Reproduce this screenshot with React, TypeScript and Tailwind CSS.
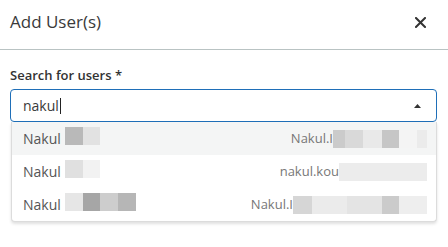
import { type FC } from 'react';

type Block = { w: number; c: string };

const Blur: FC<{ blocks: Block[]; h?: number }> = ({ blocks, h = 18 }) => (
  <span className="inline-flex shrink-0" style={{ height: h }}>
    {blocks.map((b, i) => (
      <span key={i} className="block h-full" style={{ width: b.w, background: b.c }} />
    ))}
  </span>
);

const rows: Array<{
  name: Block[];
  email: string;
  mail: Block[];
  active?: boolean;
}> = [
  {
    name: [
      { w: 18, c: '#b9b9b9' },
      { w: 17, c: '#e2e2e2' },
    ],
    email: 'Nakul.I',
    mail: [
      { w: 12, c: '#cbcbcb' },
      { w: 18, c: '#d9d9d9' },
      { w: 19, c: '#e9e9e9' },
      { w: 17, c: '#c6c6c6' },
      { w: 18, c: '#f4f4f4' },
      { w: 10, c: '#ebebeb' },
    ],
    active: true,
  },
  {
    name: [
      { w: 18, c: '#e0e0e0' },
      { w: 17, c: '#f2f2f2' },
    ],
    email: 'nakul.kou',
    mail: [{ w: 88, c: '#ececec' }],
  },
  {
    name: [
      { w: 18, c: '#e6e6e6' },
      { w: 17, c: '#a6a6a6' },
      { w: 18, c: '#cdcdcd' },
      { w: 18, c: '#b6b6b6' },
    ],
    email: 'Nakul.I',
    mail: [
      { w: 19, c: '#d6d6d6' },
      { w: 35, c: '#ebebeb' },
      { w: 35, c: '#e4e4e4' },
      { w: 17, c: '#cbcbcb' },
      { w: 28, c: '#eeeeee' },
    ],
  },
];

export default function App() {
  return (
    <div
      className="w-[448px] h-[247px] bg-white text-[#333]"
      style={{ fontFamily: '"Open Sans", "Noto Sans", sans-serif' }}
    >
      <div className="h-[50px] pb-[5px] pl-[10px] pr-[22px] flex items-center justify-between border-b border-[#b9c3c3]">
        <span className="text-[17px] text-[#3a3a3a]">Add User(s)</span>
        <svg width="11" height="11" viewBox="0 0 11 11" className="text-[#333]">
          <path d="M1 1 L10 10 M10 1 L1 10" stroke="currentColor" strokeWidth="2" strokeLinecap="square" />
        </svg>
      </div>

      <div className="px-[10px] pt-[16px]">
        <div className="text-[13px] font-semibold leading-[18px] text-[#333]">Search for users *</div>

        <div className="relative mt-[5px]">
          <div className="h-[33px] w-[427px] rounded-[4px] border border-[#1f6fb8] flex items-center pl-[12px] pr-[15px]">
            <span className="text-[14px] text-[#3a3a3a]">nakul</span>
            <span className="block w-px h-[16px] bg-[#222] ml-px" />
            <span className="flex-1" />
            <svg width="7" height="4" viewBox="0 0 7 4">
              <path d="M0 4 L3.5 0 L7 4 Z" fill="#333" />
            </svg>
          </div>

          <div className="ml-px w-[426px] border border-t-0 border-[#dcdcdc] rounded-b-[4px] shadow-[0_2px_3px_rgba(0,0,0,0.12)] bg-white">
            {rows.map((r, i) => (
              <div
                key={i}
                className={`h-[33px] flex items-center justify-between pl-[11px] pr-[9px] ${r.active ? 'bg-[#f4f5f5]' : ''}`}
              >
                <span className="flex items-center text-[14px] text-[#555]">
                  <span>Nakul I</span>
                  <span className="-ml-[3px]">
                    <Blur blocks={r.name} />
                  </span>
                </span>
                <span className="flex items-center text-[13px] text-[#777]">
                  <span>{r.email}</span>
                  <Blur blocks={r.mail} />
                </span>
              </div>
            ))}
          </div>
        </div>
      </div>
    </div>
  );
}
